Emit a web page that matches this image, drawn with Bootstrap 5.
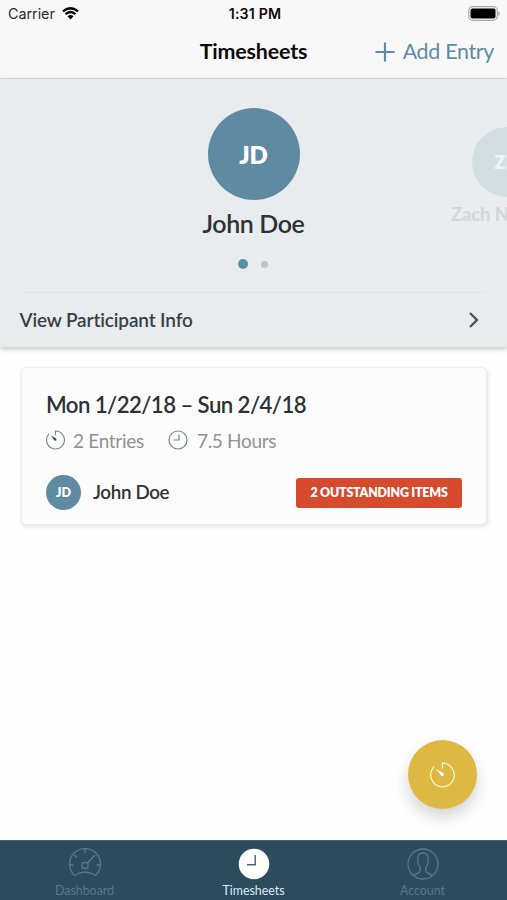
<!DOCTYPE html>
<html lang="en">
<head>
<meta charset="utf-8">
<meta name="viewport" content="width=device-width, initial-scale=1">
<title>Timesheets</title>
<link href="https://cdn.jsdelivr.net/npm/bootstrap@5.3.0/dist/css/bootstrap.min.css" rel="stylesheet">
<style>
body { font-family: Lato, sans-serif; color: #2e3234; background: #fefefe; line-height: 1; font-variant-ligatures: none; }
.screen { height: 900px; }
.topbar { height: 79px; background: #f8f8f8; border-bottom: 1px solid #dcdedf; color: #0b0b0b; }
.status { height: 27px; font: 15px/27px Inter, sans-serif; padding: 0 8px 0 8px; }
.status .side { width: 90px; }
.carrier { font-size: 14.4px; color: #2c2c2c; letter-spacing: -.05px; }
.status .wifi { margin-left: 7px; }
.clock { font-size: 14.2px; font-weight: 600; padding-left: 3px; letter-spacing: .15px; }
.titlebar { height: 50px; padding: 0 13px; }
.page-title { font-size: 21.4px; font-weight: 700; letter-spacing: -.15px; }
.add-entry { color: #5f8ba5; font-size: 21.4px; letter-spacing: -.3px; gap: 8px; width: 120px; }
.titlebar .spacer { width: 120px; }
.participant { height: 268px; background: #e8ecef; box-shadow: 0 2px 5px rgba(70,85,80,.32); }
.slides { height: 214px; margin: 0 20px; border-bottom: 1px solid #dfe4e7; }
.slide-main { padding-top: 29px; }
.avatar { border-radius: 50%; background: #5e8aa2; color: #fff; font-weight: 800; }
.avatar-lg { width: 92px; height: 92px; font-size: 24px; padding-top: 2px; }
.avatar-md { width: 70px; height: 70px; font-size: 18px; background: #d2dee2; color: #eef3f5; }
.avatar-sm { width: 35px; height: 35px; font-size: 12.5px; padding-top: 1px; }
.name-lg { font-size: 25px; font-weight: 600; letter-spacing: -.4px; margin-top: 11px; }
.slide-next { left: 451px; top: 48px; width: 112px; }
.name-next { font-size: 18.6px; letter-spacing: -.2px; font-weight: 700; color: #d2d6d9; margin-top: 8px; white-space: nowrap; }
.dots { gap: 13px; margin-top: 23px; height: 10px; margin-left: -1px; }
.dot-on { width: 10px; height: 10px; background: #5f8ca8; }
.dot-off { width: 7px; height: 7px; background: #bdc2c5; }
.info-row { height: 53px; padding: 0 28px 0 19.5px; font-size: 19px; font-weight: 600; color: #3a3f42; letter-spacing: -.14px; }
.sheet { margin: 20px 20px 0 21px; height: 158px; border: 1px solid #ededed; border-radius: 5px; background: #fcfcfc; box-shadow: 1px 2px 4px rgba(0,0,0,.1); padding: 0 25px 0 24px; }
.period { font-size: 22.2px; font-weight: 600; letter-spacing: -.58px; margin-top: 25px; line-height: 24px; }
.stats { font-size: 19px; letter-spacing: -.3px; color: #909294; margin-top: 12px; height: 22px; }
.stats .stat-b { margin-left: 24px; }
.stats svg { margin-right: 9px; }
.stats .stat-a { margin-left: -1px; }
.owner-row { margin-top: 24px; height: 35px; }
.owner { font-size: 18.8px; font-weight: 600; letter-spacing: -.35px; margin-left: 12px; }
.outstanding { width: 166px; height: 30px; border-radius: 3px; background: #d64b2e; font-size: 12.4px; font-weight: 800; letter-spacing: -.2px; padding: 2px 0 0; margin-right: -1px; }
.fab { right: 30px; bottom: 91px; width: 69px; height: 69px; background: #ddb944; box-shadow: 0 8px 15px rgba(0,0,0,.17); }
.tabs { height: 60px; background: #2c4b5c; border-top: 1px solid #456170; font-size: 12.4px; color: #57798e; }
.tab-item { padding-top: 7px; }
.tab-item span { margin-top: 5px; }
.tab-on { color: #d9eaf3; }
</style>
<script src="https://cdn.jsdelivr.net/npm/bootstrap@5.3.0/dist/js/bootstrap.bundle.min.js"></script>
</head>
<body>
<div class="screen d-flex flex-column position-relative overflow-hidden">
  <header class="topbar flex-shrink-0">
    <div class="status d-flex justify-content-between align-items-center">
      <div class="side d-flex align-items-center"><span class="carrier">Carrier</span>
        <svg class="wifi" width="17" height="13" viewBox="0 0 17 13" fill="none" stroke="#000" stroke-width="2.2"><path d="M1 4.300Q8.500-1.800 16 4.300M3.500 7.200Q8.500 2.800 13.500 7.200"/><path d="M8.500 12.500L5.500 9.300Q8.500 6.800 11.500 9.300Z" fill="#000" stroke="none"/></svg>
      </div>
      <span class="clock">1:31 PM</span>
      <div class="side d-flex justify-content-end">
        <svg width="32" height="15" viewBox="0 0 32 15" style="margin-right:-1px"><rect x=".7" y=".7" width="28.600" height="13.600" rx="4" fill="none" stroke="#aaa" stroke-width="1.200"/><rect x="2.500" y="2.500" width="25" height="10" rx="2" fill="#000"/><path d="M30.300 5v5q1.700-1 1.700-2.500T30.300 5z" fill="#aaa"/></svg>
      </div>
    </div>
    <div class="titlebar d-flex justify-content-between align-items-center">
      <span class="spacer"></span>
      <span class="page-title">Timesheets</span>
      <a class="add-entry d-flex align-items-center justify-content-end text-decoration-none text-nowrap" href="#"><svg class="flex-shrink-0" width="20" height="20" viewBox="0 0 20 20" stroke="currentColor" stroke-width="2.200"><path d="M10 .5v19M.5 10h19"/></svg>Add Entry</a>
    </div>
  </header>

  <section class="participant position-relative flex-shrink-0">
    <div class="slides">
      <div class="slide-main d-flex flex-column align-items-center">
        <div class="avatar avatar-lg d-flex align-items-center justify-content-center">JD</div>
        <div class="name-lg">John Doe</div>
        <div class="dots d-flex align-items-center"><i class="dot-on rounded-circle"></i><i class="dot-off rounded-circle"></i></div>
      </div>
      <div class="slide-next position-absolute d-flex flex-column align-items-center">
        <div class="avatar avatar-md d-flex align-items-center justify-content-center">ZN</div>
        <div class="name-next align-self-start">Zach N</div>
      </div>
    </div>
    <div class="info-row d-flex align-items-center justify-content-between">View Participant Info
      <svg width="10" height="16" viewBox="0 0 10 16" fill="none" stroke="#4c5053" stroke-width="2.200"><path d="M1 1l7 7-7 7"/></svg>
    </div>
  </section>

  <main class="flex-grow-1">
    <article class="sheet d-flex flex-column">
      <div class="period">Mon 1/22/18 – Sun 2/4/18</div>
      <div class="stats d-flex align-items-center">
        <svg width="19" height="20" viewBox="0 0 24 25" fill="none" stroke="#76858e" stroke-width="1.400"><path d="M12 6.500V1.200A11.300 11.300 0 1 1 4 4.500"/><path d="M6 6.800L13 10.800Q14 13.800 11 13.500Z" fill="#34434c" stroke="none"/></svg>
        <span class="stat-a">2 Entries</span>
        <svg class="stat-b" width="20" height="20" viewBox="0 0 20 20" fill="none" stroke="#76858e" stroke-width="1.200"><circle cx="10" cy="10" r="9"/><path d="M11 4.500V10H5.500"/></svg>
        <span class="stat-c">7.5 Hours</span>
      </div>
      <div class="owner-row d-flex align-items-center">
        <div class="avatar avatar-sm d-flex align-items-center justify-content-center">JD</div>
        <span class="owner">John Doe</span>
        <span class="outstanding badge ms-auto d-flex align-items-center justify-content-center">2 OUTSTANDING ITEMS</span>
      </div>
    </article>
  </main>

  <button class="fab btn border-0 rounded-circle p-0 position-absolute d-flex align-items-center justify-content-center" aria-label="Start timer">
    <svg width="25" height="26" viewBox="0 0 24 25" fill="none" stroke="#fff6d5" stroke-width="1.200"><path d="M12 6V1.200A11.300 11.300 0 1 1 4 4.500"/><path d="M5.500 6.500L13 10.800Q14 14 11 13.500Z" fill="#fff" stroke="none"/></svg>
  </button>

  <nav class="tabs row g-0 flex-shrink-0">
    <div class="tab-item col d-flex flex-column align-items-center">
      <svg width="34" height="32" viewBox="0 0 34 32" fill="none" stroke="currentColor" stroke-width="1.300"><path d="M6.500 27.500A15.500 15.500 0 1 1 27.500 27.500Q17 20.500 6.500 27.500Z"/><path d="M17 1v4M2 17h3.500M28.500 17H32M6.500 7l2.500 2.500M27 7L19 15.500"/><rect x="14" y="14.500" width="6" height="6" rx="2"/></svg>
      <span>Dashboard</span>
    </div>
    <div class="tab-item tab-on col d-flex flex-column align-items-center">
      <svg width="32" height="32" viewBox="0 0 32 32"><circle cx="16" cy="16" r="15.300" fill="#fff"/><path d="M17.200 7v9.700H9" fill="none" stroke="#50636d" stroke-width="1.400"/></svg>
      <span>Timesheets</span>
    </div>
    <div class="tab-item col d-flex flex-column align-items-center">
      <svg width="32" height="32" viewBox="0 0 32 32" fill="none" stroke="currentColor" stroke-width="1.300"><circle cx="16" cy="16" r="15"/><path d="M6.500 27.300Q12.500 25 13.300 22.500V19.500Q10.700 17 10.700 11Q10.700 5 16 5T21.300 11Q21.300 17 18.700 19.500V22.500Q19.500 25 25.500 27.300"/></svg>
      <span>Account</span>
    </div>
  </nav>
</div>
</body>
</html>
